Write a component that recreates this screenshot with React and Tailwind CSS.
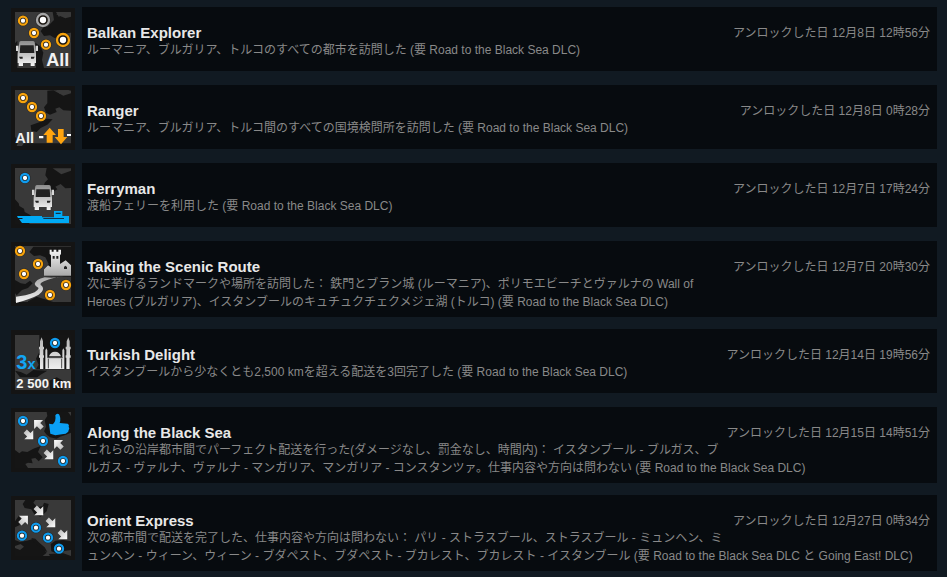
import React from "react";

function Tile({ label, sea, children }) {
  return (
    <svg className="block size-16 shrink-0" viewBox="33 24 192 192" role="img" aria-label={label}>
      <rect x="33" y="24" width="192" height="192" fill="#141414" />
      <rect x="45" y="36" width="168" height="168" fill="#393939" />
      <path d={sea} fill="#151515" />
      {children}
    </svg>
  );
}

function City({ x, y, color = "#f7a30c", r = 12 }) {
  return (
    <g>
      <circle cx={x} cy={y} r={r + 5} fill="#111" opacity="0.5" />
      <circle cx={x} cy={y} r={r} fill="#1c1813" stroke={color} strokeWidth="7" />
      <circle cx={x} cy={y} r={r / 2 + 0.5} fill="#fff" />
    </g>
  );
}

const BLUE = "#0f9bee";

function Shade({ id, from = "#ffffff", to = "#c4c4c4" }) {
  return (
    <defs>
      <linearGradient id={id} x1="0" y1="0" x2="0" y2="1">
        <stop offset="0" stopColor={from} />
        <stop offset="1" stopColor={to} />
      </linearGradient>
    </defs>
  );
}

function Truck({ x, y, id }) {
  return (
    <g transform={`translate(${x} ${y})`}>
      <Shade id={id} from="#8c8c8c" to="#f6f6f6" />
      <path
        fill={`url(#${id})`}
        d="M10 4Q11 0 16 0H50Q55 0 56 4L60 38V66H56V75H44V66H21V75H8V66H5V38Z"
      />
      <path d="M13 13H53L55 36H11Z" fill="#222" />
      <path d="M0 14H7V30H0ZM59 14H66V30H59Z" fill="#d8d8d8" />
      <path d="M9 47H20V53H12ZM56 47H45V53H53Z" fill="#222" />
    </g>
  );
}

function Arrow({ x, y, angle, id }) {
  return (
    <g transform={`translate(${x} ${y}) rotate(${angle})`}>
      <path d="M0 -18L19 1H7V16H-7V1H-19Z" fill={`url(#${id})`} />
    </g>
  );
}

const SEA = "M140 36H213V96L196 97L182 84L166 92L172 100L158 108L140 108L130 96L134 80L144 70L136 58ZM45 130L56 142L58 150L72 158L74 168L92 178L88 204H45Z";

function BalkanIcon() {
  return (
    <Tile label="Balkan Explorer" sea="M150 72L162 60L158 36H168L176 50L190 44L213 38V98L196 100L180 112L164 114L150 106L132 108L122 94L130 82L142 80ZM45 130L52 122V204H45ZM106 128L122 140L130 158L126 180L132 204H108Z">
      <path d="M168 43L213 37V50L196 55Z" fill="#393939" />
      <City x={69} y={62} />
      <City x={102} y={99} />
      <City x={138} y={134} />
      <City x={129} y={60} r={18} color="#a5a5a5" />
      <City x={189} y={120} r={18} />
      <Truck x={48} y={123} id="truck-balkan" />
      <text x="139" y="198" className="font-['Liberation_Sans',Arial,sans-serif] text-[54px] font-bold" fill="#f2f2f2">All</text>
    </Tile>
  );
}

function RangerIcon() {
  return (
    <Tile label="Ranger" sea="M142 38L168 36L180 48L213 36V98L190 97L178 88L166 92L170 102L150 110L138 104L132 88L142 76ZM92 142L120 132L140 122L158 124L142 140L122 150L110 162L94 158ZM45 176L56 190L50 204H45ZM72 196H213V204H66Z">
      <path d="M160 37L213 38V46L190 53Z" fill="#393939" />
      <City x={69} y={60} />
      <City x={96} y={87} />
      <City x={123} y={114} />
      <text x="46" y="194" className="font-['Liberation_Sans',Arial,sans-serif] text-[44px] font-bold" fill="#f2f2f2">All</text>
      <path d="M117 174H130V181H117ZM201 168H213V174H201Z" fill="#fff" />
      <path d="M149 149L168 171H158V194H140V171H130ZM183 199L202 177H191V153H174V177H164Z" fill="#ffa40f" />
    </Tile>
  );
}

function FerryIcon() {
  return (
    <Tile label="Ferryman" sea={SEA}>
      <path d="M158 37H213V44L184 55Z" fill="#393939" />
      <City x={75} y={66} color={BLUE} />
      <Truck x={96} y={87} id="truck-ferry" />
      <path d="M51 180H126V184H162V165H187V180H207V201H66L57 189H69L66 186H54Z" fill="#00aaf5" />
      <path d="M167 170H182V174H167ZM130 186H192V189H130Z" fill="#123247" />
    </Tile>
  );
}

function ScenicIcon() {
  return (
    <Tile label="Taking the Scenic Route" sea="M100 38H213V128L132 126V104L146 90L136 70L120 64L102 66L88 54ZM45 138L62 148L76 150L90 140L98 148L84 162L66 168L50 184L45 178ZM84 202L110 188L134 196L160 204H84Z">
      <Shade id="castle" from="#f4f4f4" to="#a8a8a8" />
      <Shade id="road" from="#a8a8a8" to="#f4f4f4" />
      <path d="M149 47H155V53H161V47H169V53H175V47H183V60L180 64V90L197 79L213 94V125H132V106L144 94L153 100V64L149 60Z" fill="url(#castle)" />
      <path d="M158 66H164V74H158ZM169 66H175V74H169ZM192 99L196 95L201 99V105H192Z" fill="#222" />
      <path d="M196 127Q160 134 134 130Q106 137 104 150Q106 158 116 162Q112 176 76 184L48 188V207Q94 194 116 182Q136 168 126 156Q114 150 132 142Q158 130 196 127Z" fill="url(#road)" />
      <City x={60} y={51} />
      <City x={114} y={90} />
      <City x={72} y={120} />
      <City x={198} y={153} />
      <City x={150} y={183} />
    </Tile>
  );
}

function TurkishIcon() {
  return (
    <Tile label="Turkish Delight" sea="M118 39H213V142H108L116 128L108 110L118 90ZM45 146L62 150L80 158L100 144L142 146L122 158L112 166H60ZM148 176L170 166L190 176V204H150Z">
      <rect x="45" y="36" width="168" height="3" fill="#141414" />
      <Shade id="mosque" from="#b4b4b4" to="#efefef" />
      <path
        fill="url(#mosque)"
        d="M125 46L129 58V74H132V82H130V100H132V107H130V141H120V107H117V100H119V82H117V74H120V58ZM205 46L209 58V74H212V82H210V100H212V107H209V141H199V107H197V100H199V82H197V74H200V58ZM136 85L139 79L142 85V107H187V85L190 79L193 85V141H136ZM147 103Q151 89 165 89Q179 89 183 103Z"
      />
      <path d="M143 107H188M145 110V139M185 110V139" fill="none" stroke="#4a4a4a" strokeWidth="3" />
      <City x={165} y={63} color={BLUE} />
      <text x="49" y="141" className="font-['Liberation_Sans',Arial,sans-serif] text-[60px] font-bold" fill="#12a5f4">3<tspan className="text-[44px]">x</tspan></text>
      <text x="49" y="197" className="font-['Liberation_Sans',Arial,sans-serif] text-[39px] font-bold" fill="#f5f5f5">2 500 km</text>
    </Tile>
  );
}

function BlackSeaIcon() {
  return (
    <Tile label="Along the Black Sea" sea="M140 36H204L213 48V98L198 104L180 110L170 116L150 112L140 104L132 94L138 80L134 60L142 48ZM45 150L58 160L66 154L82 156L100 146L122 138L114 156L128 172L116 184L106 174L94 176L98 190L84 188L76 192L84 204H45Z">
      <Shade id="sea-arrow" />
      <City x={69} y={63} color={BLUE} />
      <City x={129} y={123} color={BLUE} />
      <City x={189} y={183} color={BLUE} />
      <Arrow x={115} y={73} angle={-45} id="sea-arrow" />
      <Arrow x={87} y={105} angle={135} id="sea-arrow" />
      <Arrow x={175} y={133} angle={-45} id="sea-arrow" />
      <Arrow x={147} y={165} angle={135} id="sea-arrow" />
      <path d="M147 71L158 73Q169 64 166 46Q170 38 177 43Q184 55 179 69L203 71Q209 74 206 80Q210 85 206 90Q206 96 201 98Q198 102 191 102L166 106L151 101Z" fill="#0ba0f5" />
    </Tile>
  );
}

function OrientIcon() {
  return (
    <Tile label="Orient Express" sea="M45 36H76L68 48L74 60L94 64L104 80L122 86L140 70L146 48L132 44L128 54L112 58L100 44L106 36H45V118L58 112L66 96L56 84L45 100ZM45 156L60 162L80 158L96 154L110 166L126 180L140 194L128 204H45V180L60 186L72 176L62 168L45 174ZM152 168L166 158L190 156L213 160V186L188 190L174 198L154 190ZM146 198L190 196L213 204H150Z">
      <path d="M94 150L106 152L118 164L134 178L142 192L132 188L118 174L102 164Z" fill="#151515" />
      <Shade id="orient-arrow" />
      <City x={66} y={143} color={BLUE} />
      <City x={108} y={119} color={BLUE} />
      <City x={144} y={149} color={BLUE} />
      <City x={177} y={182} color={BLUE} />
      <Arrow x={71} y={96} angle={45} id="orient-arrow" />
      <Arrow x={117} y={69} angle={135} id="orient-arrow" />
      <Arrow x={153} y={105} angle={135} id="orient-arrow" />
      <Arrow x={189} y={141} angle={135} id="orient-arrow" />
    </Tile>
  );
}

const achievements = [
  { Icon: BalkanIcon, title: "Balkan Explorer", date: "12月8日 12時56分", text: "ルーマニア、ブルガリア、トルコのすべての都市を訪問した (要 Road to the Black Sea DLC)" },
  { Icon: RangerIcon, title: "Ranger", date: "12月8日 0時28分", text: "ルーマニア、ブルガリア、トルコ間のすべての国境検問所を訪問した (要 Road to the Black Sea DLC)" },
  { Icon: FerryIcon, title: "Ferryman", date: "12月7日 17時24分", text: "渡船フェリーを利用した (要 Road to the Black Sea DLC)" },
  { Icon: ScenicIcon, title: "Taking the Scenic Route", date: "12月7日 20時30分", text: "次に挙げるランドマークや場所を訪問した： 鉄門とブラン城 (ルーマニア)、ポリモエビーチとヴァルナの Wall of Heroes (ブルガリア)、イスタンブールのキュチュクチェクメジェ湖 (トルコ) (要 Road to the Black Sea DLC)" },
  { Icon: TurkishIcon, title: "Turkish Delight", date: "12月14日 19時56分", text: "イスタンブールから少なくとも2,500 kmを超える配送を3回完了した (要 Road to the Black Sea DLC)" },
  { Icon: BlackSeaIcon, title: "Along the Black Sea", date: "12月15日 14時51分", text: "これらの沿岸都市間でパーフェクト配送を行った(ダメージなし、罰金なし、時間内)： イスタンブール - ブルガス、ブルガス - ヴァルナ、ヴァルナ - マンガリア、マンガリア - コンスタンツァ。仕事内容や方向は問わない (要 Road to the Black Sea DLC)" },
  { Icon: OrientIcon, title: "Orient Express", date: "12月27日 0時34分", text: "次の都市間で配送を完了した、仕事内容や方向は問わない： パリ - ストラスブール、ストラスブール - ミュンヘン、ミュンヘン - ウィーン、ウィーン - ブダペスト、ブダペスト - ブカレスト、ブカレスト - イスタンブール (要 Road to the Black Sea DLC と Going East! DLC)" },
];

export default function App() {
  return (
    <main lang="ja" className="min-h-screen bg-[#111a22] px-[10px] pt-[7px] font-['Liberation_Sans',Arial,'Noto_Sans_CJK_JP',sans-serif] text-[12px] text-[#898989]">
      <ul>
        {achievements.map(({ Icon, title, date, text }) => (
          <li key={title} className="mb-3 flex items-start gap-[6px] last:mb-0">
            <div className="shrink-0 p-px">
              <Icon />
            </div>
            <div className="min-h-16 min-w-0 grow bg-[#070b0f] pt-[17px] pr-[7px] pb-[6px] pl-[5px]">
              <div className="float-right h-[20px] pl-[6px] leading-[18px]">アンロックした日 {date}</div>
              <h3 className="text-[15px] leading-[17px] font-bold text-[#e8e8e8]">{title}</h3>
              <p className="leading-[18px]">{text}</p>
            </div>
          </li>
        ))}
      </ul>
    </main>
  );
}
